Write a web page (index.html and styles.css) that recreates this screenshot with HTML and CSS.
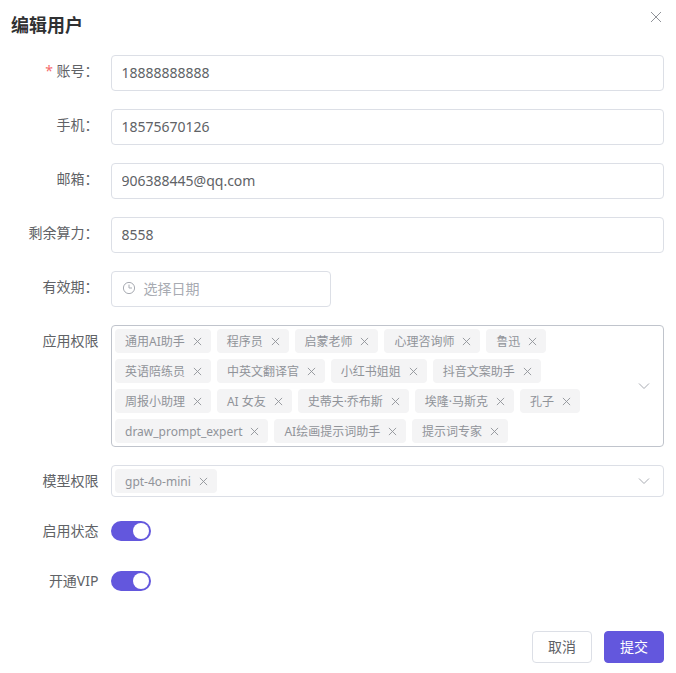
FILE: index.html
```html
<!DOCTYPE html>
<html lang="zh-CN">
<head>
    <meta charset="UTF-8">
    <title>编辑用户</title>
    <link rel="stylesheet" href="styles.css">
</head>
<body>

<div class="dialog">
    <header class="dialog-header">
        <span class="dialog-title">编辑用户</span>
        <button class="dialog-close" type="button" aria-label="关闭">
            <svg viewBox="0 0 12 12" width="12" height="12"><path d="M1 1l10 10M11 1L1 11"/></svg>
        </button>
    </header>

    <form class="user-form">
        <div class="form-item">
            <label class="form-label"><span class="required">*</span> 账号：</label>
            <input class="text-input" type="text" value="18888888888">
        </div>
        <div class="form-item">
            <label class="form-label">手机：</label>
            <input class="text-input" type="text" value="18575670126">
        </div>
        <div class="form-item">
            <label class="form-label">邮箱：</label>
            <input class="text-input" type="text" value="906388445@qq.com">
        </div>
        <div class="form-item">
            <label class="form-label">剩余算力：</label>
            <input class="text-input" type="text" value="8558">
        </div>
        <div class="form-item">
            <label class="form-label">有效期：</label>
            <div class="date-input">
                <svg class="clock" viewBox="0 0 14 14" width="14" height="14"><circle cx="7" cy="7" r="5.6"/><path d="M7 3.6V7h3"/></svg>
                <span class="placeholder">选择日期</span>
            </div>
        </div>
        <div class="form-item">
            <label class="form-label">应用权限</label>
            <div class="select select-active">
                <div class="tags">
                    <span class="tag">通用AI助手<svg viewBox="0 0 10 10"><path d="M1 1l8 8M9 1L1 9"/></svg></span>
                    <span class="tag">程序员<svg viewBox="0 0 10 10"><path d="M1 1l8 8M9 1L1 9"/></svg></span>
                    <span class="tag">启蒙老师<svg viewBox="0 0 10 10"><path d="M1 1l8 8M9 1L1 9"/></svg></span>
                    <span class="tag">心理咨询师<svg viewBox="0 0 10 10"><path d="M1 1l8 8M9 1L1 9"/></svg></span>
                    <span class="tag">鲁迅<svg viewBox="0 0 10 10"><path d="M1 1l8 8M9 1L1 9"/></svg></span>
                    <span class="tag">英语陪练员<svg viewBox="0 0 10 10"><path d="M1 1l8 8M9 1L1 9"/></svg></span>
                    <span class="tag">中英文翻译官<svg viewBox="0 0 10 10"><path d="M1 1l8 8M9 1L1 9"/></svg></span>
                    <span class="tag">小红书姐姐<svg viewBox="0 0 10 10"><path d="M1 1l8 8M9 1L1 9"/></svg></span>
                    <span class="tag">抖音文案助手<svg viewBox="0 0 10 10"><path d="M1 1l8 8M9 1L1 9"/></svg></span>
                    <span class="tag">周报小助理<svg viewBox="0 0 10 10"><path d="M1 1l8 8M9 1L1 9"/></svg></span>
                    <span class="tag">AI 女友<svg viewBox="0 0 10 10"><path d="M1 1l8 8M9 1L1 9"/></svg></span>
                    <span class="tag">史蒂夫·乔布斯<svg viewBox="0 0 10 10"><path d="M1 1l8 8M9 1L1 9"/></svg></span>
                    <span class="tag">埃隆·马斯克<svg viewBox="0 0 10 10"><path d="M1 1l8 8M9 1L1 9"/></svg></span>
                    <span class="tag">孔子<svg viewBox="0 0 10 10"><path d="M1 1l8 8M9 1L1 9"/></svg></span>
                    <span class="tag">draw_prompt_expert<svg viewBox="0 0 10 10"><path d="M1 1l8 8M9 1L1 9"/></svg></span>
                    <span class="tag">AI绘画提示词助手<svg viewBox="0 0 10 10"><path d="M1 1l8 8M9 1L1 9"/></svg></span>
                    <span class="tag">提示词专家<svg viewBox="0 0 10 10"><path d="M1 1l8 8M9 1L1 9"/></svg></span>
                </div>
                <svg class="chevron" viewBox="0 0 12 8" width="12" height="8"><path d="M1 1.5l5 5 5-5"/></svg>
            </div>
        </div>
        <div class="form-item">
            <label class="form-label">模型权限</label>
            <div class="select">
                <div class="tags">
                    <span class="tag">gpt-4o-mini<svg viewBox="0 0 10 10"><path d="M1 1l8 8M9 1L1 9"/></svg></span>
                </div>
                <svg class="chevron" viewBox="0 0 12 8" width="12" height="8"><path d="M1 1.5l5 5 5-5"/></svg>
            </div>
        </div>
        <div class="form-item form-item-switch">
            <label class="form-label">启用状态</label>
            <span class="switch"><span class="switch-knob"></span></span>
        </div>
        <div class="form-item form-item-switch">
            <label class="form-label">开通VIP</label>
            <span class="switch"><span class="switch-knob"></span></span>
        </div>
    </form>

    <footer class="dialog-footer">
        <button class="btn" type="button">取消</button>
        <button class="btn btn-primary" type="button">提交</button>
    </footer>
</div>

</body>
</html>
```

FILE: styles.css
```css
* {
    box-sizing: border-box;
}

body {
    margin: 0;
    background-color: #fff;
    color: #606266;
    font-family: "Noto Sans", "Noto Sans CJK SC", sans-serif;
    font-size: 14px;
}

.dialog {
    position: relative;
    padding: 13px 12px 10px 11px;
}

.dialog-header {
    height: 24px;
    line-height: 24px;
    margin-bottom: 18px;
}

.dialog-title {
    font-size: 18px;
    font-weight: 700;
    color: #303133;
}

.dialog-close {
    position: absolute;
    top: 11px;
    right: 14px;
    padding: 0;
    width: 12px;
    height: 12px;
    border: 0;
    background: none;
}

.dialog-close svg {
    display: block;
    fill: none;
    stroke: #909399;
    stroke-width: 1;
}

.form-item {
    display: flex;
    margin-bottom: 18px;
}

.form-label {
    flex: 0 0 100px;
    padding-right: 12.5px;
    line-height: 32px;
    text-align: right;
    color: #606266;
}

.required {
    color: #f56c6c;
}

.text-input {
    flex: 1;
    height: 36px;
    padding: 0 9.5px 2px;
    border: 1px solid #dcdfe6;
    border-radius: 4px;
    color: #606266;
    font-family: inherit;
    font-size: 14px;
    outline: none;
}

.date-input {
    display: flex;
    align-items: center;
    gap: 7.5px;
    width: 220px;
    height: 36px;
    padding: 0 10px 2px;
    border: 1px solid #dcdfe6;
    border-radius: 4px;
}

.clock {
    fill: none;
    stroke: #a8abb2;
    stroke-width: 1;
}

.placeholder {
    color: #a8abb2;
}

.select {
    flex: 1;
    display: flex;
    align-items: center;
    min-height: 32px;
    padding: 3px 13px 3px 3px;
    border: 1px solid #dcdfe6;
    border-radius: 4px;
}

.select-active {
    border-color: #c0c4cc;
}

.tags {
    flex: 1;
    display: flex;
    flex-wrap: wrap;
    gap: 6px;
    padding-right: 17px;
}

.tag {
    display: inline-flex;
    align-items: center;
    height: 24px;
    padding: 0 9px 0 10px;
    border-radius: 4px;
    background-color: #f4f4f5;
    color: #909399;
    font-size: 12px;
}

.tag svg {
    width: 9px;
    height: 9px;
    margin-left: 7.9px;
    fill: none;
    stroke: #909399;
    stroke-width: 1;
}

.chevron {
    fill: none;
    stroke: #a8abb2;
    stroke-width: 1;
}

.form-item-switch {
    align-items: flex-start;
}

.switch {
    display: flex;
    justify-content: flex-end;
    align-items: center;
    width: 40px;
    height: 20px;
    margin-top: 6px;
    padding: 2px;
    border-radius: 10px;
    background-color: #6357dd;
}

.switch-knob {
    width: 16px;
    height: 16px;
    border-radius: 50%;
    background-color: #fff;
}

.dialog-footer {
    display: flex;
    justify-content: flex-end;
    gap: 12px;
    margin-top: 34px;
}

.btn {
    width: 60px;
    height: 32px;
    padding: 0 0 2px;
    border: 1px solid #dcdfe6;
    border-radius: 4px;
    background-color: #fff;
    color: #606266;
    font-family: inherit;
    font-size: 14px;
}

.btn-primary {
    border-color: #6357dd;
    background-color: #6357dd;
    color: #fff;
}
```
